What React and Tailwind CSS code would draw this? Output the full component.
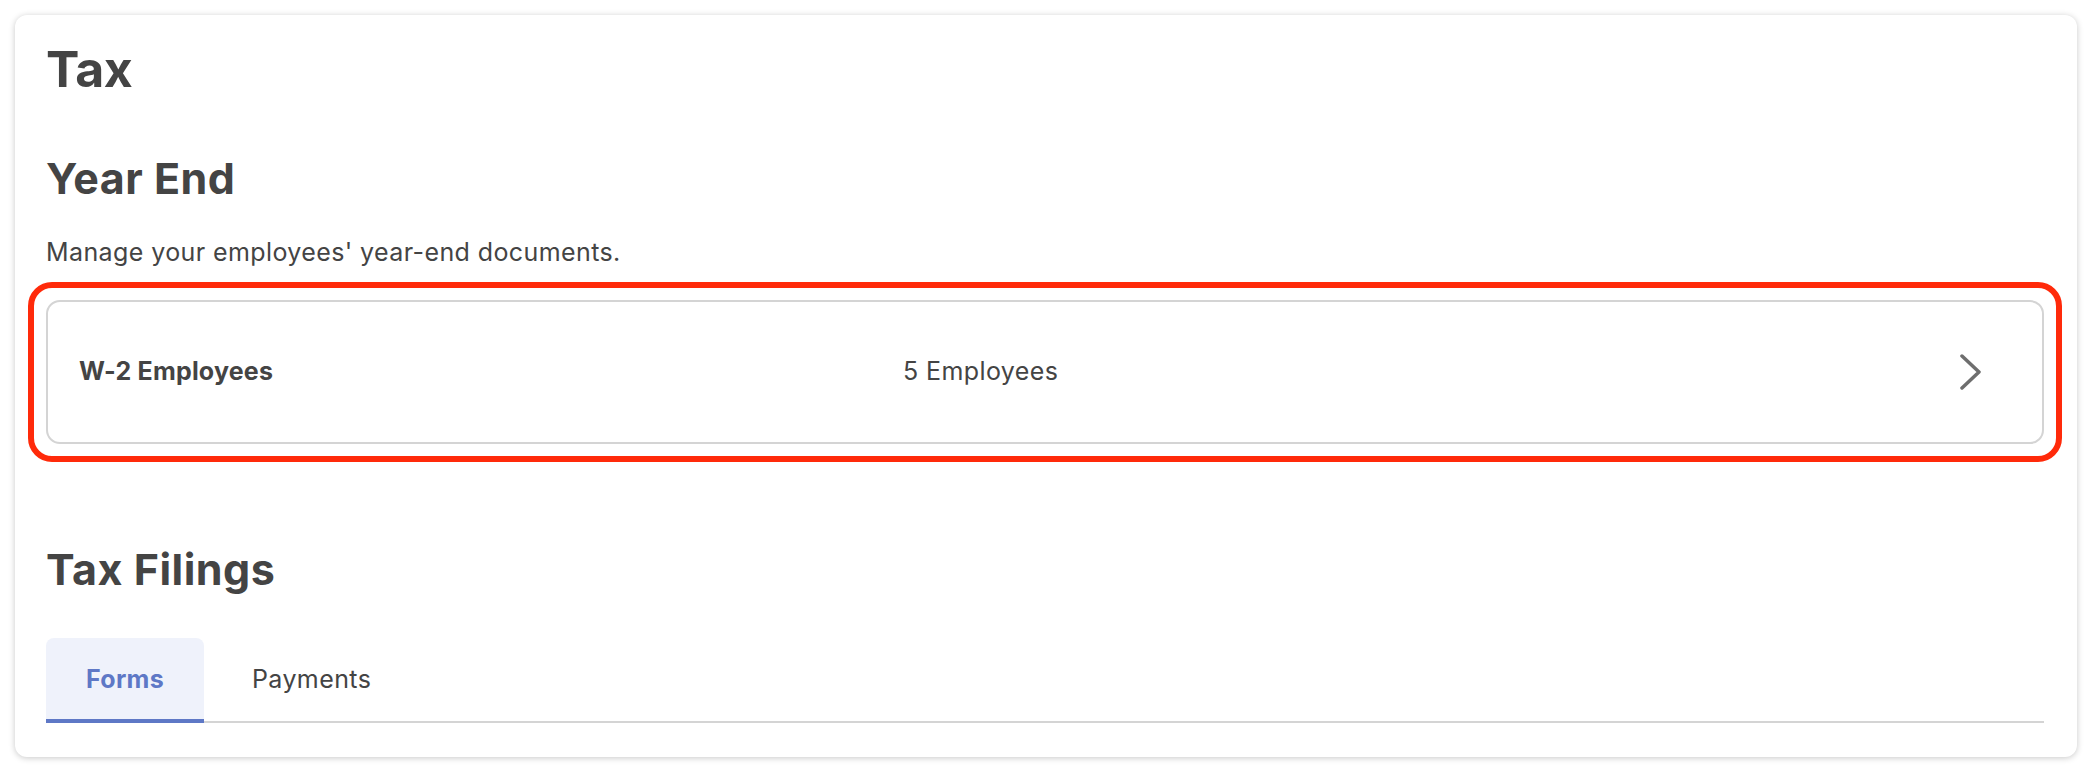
import React, { useState } from 'react'

const font = { fontFamily: 'Inter, "Noto Sans", sans-serif' }

const tabClass = (active) =>
  active
    ? 'h-[85px] pt-[2px] px-[40px] rounded-t-[8px] bg-[#eff2fb] border-b-4 border-[#5e78c6] text-[25px] font-bold tracking-[0.3px] text-[#5e78c6] -mb-[2px]'
    : 'h-[85px] pt-[2px] px-[40px] rounded-t-[8px] border-b-4 border-transparent text-[25px] tracking-[0.4px] text-[#444444] -mb-[2px]'

export default function App() {
  const [tab, setTab] = useState('forms')
  return (
    <div className="w-full h-[772px] bg-white p-[15px] text-[#444444]" style={font}>
      <div className="h-full rounded-[12px] bg-white shadow-[0_1px_6px_rgba(0,0,0,0.22)] pl-[31px] pr-[33px] pt-[28px]">
        <h1 className="text-[50px] leading-[52px] font-bold tracking-[-0.5px]">Tax</h1>

        <h2 className="mt-[62px] text-[43px] leading-[42px] font-bold tracking-[0.5px]">Year End</h2>
        <p className="mt-[41px] text-[25px] leading-[24px] tracking-[0.4px]">Manage your employees' year-end documents.</p>

        <div className="-mx-[18px] mt-[18px] rounded-[24px] border-[6px] border-[#ff2a0a] p-[12px]">
          <button className="flex w-full h-[144px] items-center rounded-[14px] border-2 border-[#d4d4d4] bg-white pl-[31px] pr-[59px] text-left">
            <span className="w-[824px] shrink-0 text-[25px] font-bold tracking-[0.2px]">W-2 Employees</span>
            <span className="flex-1 text-[25px] tracking-[0.4px]">5 Employees</span>
            <svg width="24" height="36" viewBox="0 0 24 36" fill="none" className="shrink-0">
              <path d="M3 2 L20 18 L3 34" stroke="#6e6e6e" strokeWidth="3.5" strokeLinecap="round" strokeLinejoin="round" />
            </svg>
          </button>
        </div>

        <h2 className="mt-[86px] text-[43px] leading-[42px] font-bold tracking-[0.5px]">Tax Filings</h2>

        <div className="mt-[48px] flex gap-[8px] border-b-2 border-[#d4d4d4]">
          <button onClick={() => setTab('forms')} className={tabClass(tab === 'forms')}>
            Forms
          </button>
          <button onClick={() => setTab('payments')} className={tabClass(tab === 'payments')}>
            Payments
          </button>
        </div>
      </div>
    </div>
  )
}
